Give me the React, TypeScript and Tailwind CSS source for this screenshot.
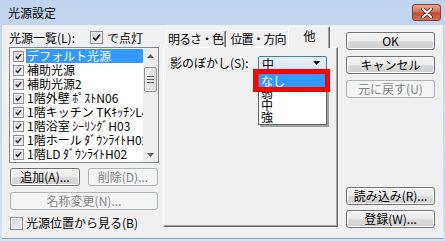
import React from 'react';

const btn =
  'h-[18px] flex items-center justify-center rounded-[3px] border border-[#707070] bg-[linear-gradient(#f2f2f2_0%,#ebebeb_50%,#dddddd_50%,#cfcfcf_100%)] shadow-[inset_0_0_0_1px_#fcfcfc] text-black';
const btnOff =
  'h-[18px] flex items-center justify-center rounded-[3px] border border-[#adb2b5] bg-[#f4f4f4] text-[#838383]';

function Check({ on, size = 13 }: { on: boolean; size?: number }) {
  return (
    <span
      className="shrink-0 flex items-center justify-center border border-[#8e8f8f] bg-[linear-gradient(135deg,#cbcfd5,#f6f6f6)] shadow-[inset_0_0_0_1px_#f4f4f4]"
      style={{ width: size, height: size }}
    >
      {on && (
        <svg width={size - 4} height={size - 4} viewBox="0 0 9 9">
          <path d="M1 4.5 L3.5 7 L8 1.5" fill="none" stroke="#222" strokeWidth="1.8" />
        </svg>
      )}
    </span>
  );
}

const items = [
  'デフォルト光源',
  '補助光源',
  '補助光源2',
  '1階外壁 ﾎﾟｽﾄN06',
  '1階キッチン TKｷｯﾁﾝL4',
  '1階浴室 ｼｰﾘﾝｸﾞH03',
  '1階ホール ﾀﾞｳﾝﾗｲﾄH02',
  '1階LD ﾀﾞｳﾝﾗｲﾄH02',
];

function ListBox() {
  return (
    <div className="mt-[1px] h-[116px] w-[150px] border border-[#828790] bg-white flex">
      <div className="flex-1 pt-[1px] overflow-hidden">
        {items.map((t, i) => (
          <div key={t} className="h-[14px] flex items-center pl-[3px]">
            <Check on size={11} />
            <span
              className={
                'ml-[2px] pl-[1px] flex-1 h-[14px] leading-[14px] whitespace-nowrap overflow-hidden ' +
                (i === 0 ? 'bg-[#3399ff] text-white' : '')
              }
            >
              {t}
            </span>
          </div>
        ))}
      </div>
      <div className="w-[15px] bg-[#eeeeee] flex flex-col items-center">
        <div className="h-[15px] flex items-center justify-center">
          <svg width="7" height="4" viewBox="0 0 7 4">
            <path d="M0 4 L3.5 0 L7 4 Z" fill="#606060" />
          </svg>
        </div>
        <div className="mt-[4px] h-[25px] w-[13px] rounded-[2px] border border-[#979797] bg-[linear-gradient(90deg,#f0f0f0,#dcdcdc)] flex flex-col items-center justify-center gap-[2px]">
          <span className="w-[7px] h-[1px] bg-[#606060]" />
          <span className="w-[7px] h-[1px] bg-[#606060]" />
          <span className="w-[7px] h-[1px] bg-[#606060]" />
        </div>
        <div className="mt-auto h-[15px] flex items-center justify-center">
          <svg width="7" height="4" viewBox="0 0 7 4">
            <path d="M0 0 L3.5 4 L7 0 Z" fill="#606060" />
          </svg>
        </div>
      </div>
    </div>
  );
}

function Tab({ label, w, sel }: { label: string; w: number; sel?: boolean }) {
  return (
    <div
      className={
        'flex justify-center rounded-t-[2px] border-t border-l border-white border-r border-r-[#696969] shadow-[inset_-1px_0_0_#a0a0a0] bg-[#f0f0f0] ' +
        (sel ? 'relative z-10 h-[22px] pt-[2px]' : 'h-[18px] pt-[1px]')
      }
      style={{ width: w }}
    >
      <span className="leading-[14px] whitespace-nowrap tracking-[-1px]">{label}</span>
    </div>
  );
}

export default function App() {
  return (
    <div className="w-[445px] h-[241px] flex flex-col bg-[linear-gradient(#bfd4ee,#d3e2f4)] font-['Noto_Sans_CJK_JP',sans-serif] text-[12px] text-black overflow-hidden">
      <div className="h-[25px] flex items-center justify-between pl-[8px] pr-[4px]">
        <span className="leading-[14px]">光源設定</span>
        <div className="w-[29px] h-[17px] rounded-[3px] border border-[#8b3a2e] bg-[linear-gradient(#e8a493,#d0705c_45%,#c24b33_55%,#d6735a)] flex items-center justify-center">
          <svg width="12" height="10" viewBox="0 0 12 10">
            <path d="M2 1 L10 9 M10 1 L2 9" stroke="#5a1e15" strokeWidth="3.6" strokeLinecap="round" />
            <path d="M2 1 L10 9 M10 1 L2 9" stroke="#fff" strokeWidth="2" strokeLinecap="round" />
          </svg>
        </div>
      </div>
      <div className="flex-1 mx-[2px] mb-[2px] bg-[#f0f0f0] border-b border-[#7d9cc0] flex">
        {/* left */}
        <div className="ml-[7px] w-[150px] pt-[4px] flex flex-col">
          <div className="h-[17px] flex items-center">
            <span className="leading-[14px]">光源一覧(L):</span>
            <span className="ml-[15px]">
              <Check on />
            </span>
            <span className="ml-[4px] leading-[14px]">で点灯</span>
          </div>
          <ListBox />
          <div className="mt-[5px] px-[1px] flex justify-between">
            <div className={btn + ' w-[70px]'}>追加(A)...</div>
            <div className={btnOff + ' w-[70px]'}>削除(D)...</div>
          </div>
          <div className={btnOff + ' mt-[6px] mx-[1px]'}>名称変更(N)...</div>
          <div className="mt-[6px] ml-[1px] flex items-center">
            <Check on={false} />
            <span className="ml-[3px] leading-[14px]">光源位置から見る(B)</span>
          </div>
        </div>

        {/* tabs */}
        <div className="ml-[4px] w-[175px] pt-[2px] flex flex-col">
          <div className="h-[21px] pl-[2px] flex items-end">
            <Tab label="明るさ・色" w={61} />
            <Tab label="位置・方向" w={64} />
            <div className="-ml-[2px]">
              <Tab label="他" w={42} sel />
            </div>
          </div>
          <div className="-mt-[1px] h-[180px] border-l border-t border-white border-r border-b border-r-[#696969] border-b-[#696969] shadow-[inset_-1px_-1px_0_#a0a0a0] bg-[#f0f0f0] pl-[6px] pt-[8px]">
            <div className="flex items-center h-[14px]">
              <span className="w-[88px] leading-[14px]">影のぼかし(S):</span>
              <div className="relative">
                <div className="w-[69px] h-[15px] rounded-[2px] border border-[#3c7fb1] bg-[linear-gradient(#eaf3fb,#d4e6f5)] flex items-center pl-[3px]">
                  <span className="leading-[13px] flex-1">中</span>
                  <svg width="7" height="4" viewBox="0 0 7 4" className="mr-[6px]">
                    <path d="M0 0 L3.5 4 L7 0 Z" fill="#000" />
                  </svg>
                </div>
                <div className="absolute left-0 top-[14px] w-[69px] h-[55px] border border-[#646464] bg-white shadow-[2px_2px_0_#a0a0a0] pt-[3px] z-10">
                  <div className="h-[13px] leading-[13px] pl-[2px] bg-[#3399ff] text-white">なし</div>
                  <div className="h-[12px] leading-[12px] pl-[2px]">弱</div>
                  <div className="h-[12px] leading-[12px] pl-[2px]">中</div>
                  <div className="h-[12px] leading-[12px] pl-[2px]">強</div>
                </div>
                <div className="absolute left-[-5px] top-[13px] w-[77px] h-[23px] border-[5px] border-[#ff0000] z-20" />
              </div>
            </div>
          </div>
        </div>

        {/* right buttons */}
        <div className="ml-[8px] w-[89px] pt-[7px] pb-[10px] flex flex-col">
          <div className={btn}>OK</div>
          <div className={btn + ' mt-[6px]'}>キャンセル</div>
          <div className={btnOff + ' mt-[6px]'}>元に戻す(U)</div>
          <div className={btn + ' mt-auto'}>読み込み(R)...</div>
          <div className={btn + ' mt-[5px]'}>登録(W)...</div>
        </div>
      </div>
    </div>
  );
}
